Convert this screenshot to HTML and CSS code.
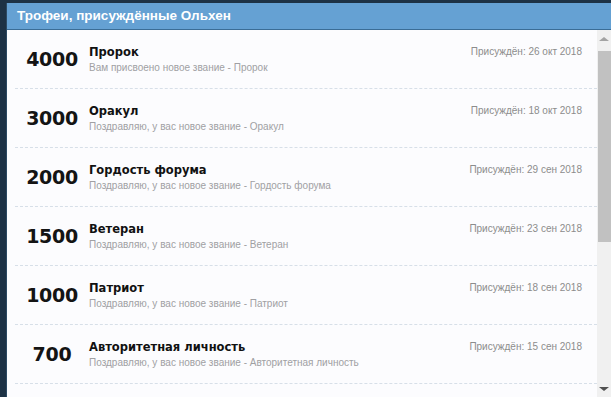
FILE: index.html
```html
<!DOCTYPE html>
<html lang="ru">
<head>
    <meta charset="UTF-8">
    <meta name="viewport" content="width=device-width, initial-scale=1.0">
    <title>Трофеи</title>
    <link rel="stylesheet" href="styles.css">
</head>
<body>
    <div class="overlay">
        <h2 class="overlay-title">Трофеи, присуждённые Ольхен</h2>
        <div class="overlay-body">
            <ol class="trophy-list">
                <li class="trophy">
                    <div class="trophy-points">4000</div>
                    <div class="trophy-info">
                        <div class="trophy-name">Пророк</div>
                        <div class="trophy-desc">Вам присвоено новое звание - Пророк</div>
                    </div>
                    <div class="trophy-date">Присуждён: 26 окт 2018</div>
                </li>
                <li class="trophy">
                    <div class="trophy-points">3000</div>
                    <div class="trophy-info">
                        <div class="trophy-name">Оракул</div>
                        <div class="trophy-desc">Поздравляю, у вас новое звание - Оракул</div>
                    </div>
                    <div class="trophy-date">Присуждён: 18 окт 2018</div>
                </li>
                <li class="trophy">
                    <div class="trophy-points">2000</div>
                    <div class="trophy-info">
                        <div class="trophy-name">Гордость форума</div>
                        <div class="trophy-desc">Поздравляю, у вас новое звание - Гордость форума</div>
                    </div>
                    <div class="trophy-date">Присуждён: 29 сен 2018</div>
                </li>
                <li class="trophy">
                    <div class="trophy-points">1500</div>
                    <div class="trophy-info">
                        <div class="trophy-name">Ветеран</div>
                        <div class="trophy-desc">Поздравляю, у вас новое звание - Ветеран</div>
                    </div>
                    <div class="trophy-date">Присуждён: 23 сен 2018</div>
                </li>
                <li class="trophy">
                    <div class="trophy-points">1000</div>
                    <div class="trophy-info">
                        <div class="trophy-name">Патриот</div>
                        <div class="trophy-desc">Поздравляю, у вас новое звание - Патриот</div>
                    </div>
                    <div class="trophy-date">Присуждён: 18 сен 2018</div>
                </li>
                <li class="trophy">
                    <div class="trophy-points">700</div>
                    <div class="trophy-info">
                        <div class="trophy-name">Авторитетная личность</div>
                        <div class="trophy-desc">Поздравляю, у вас новое звание - Авторитетная личность</div>
                    </div>
                    <div class="trophy-date">Присуждён: 15 сен 2018</div>
                </li>
            </ol>
            <div class="scrollbar">
                <div class="scroll-arrow up"></div>
                <div class="scroll-track">
                    <div class="scroll-thumb"></div>
                </div>
                <div class="scroll-arrow down"></div>
            </div>
        </div>
    </div>
</body>
</html>
```

FILE: styles.css
```css
html, body {
    height: 100%;
}
body {
    margin: 0;
    padding: 3px 0 0 6px;
    box-sizing: border-box;
    background: #1d3245;
    overflow: hidden;
    font-family: "Liberation Sans", Arial, sans-serif;
}
.overlay {
    display: flex;
    flex-direction: column;
    height: 100%;
    border-left: 1px solid #2c4a63;
}
.overlay-title {
    margin: 0;
    height: 26px;
    padding: 0 10px;
    line-height: 26px;
    font-size: 13.5px;
    font-weight: bold;
    color: #fff;
    background: #65a1d3;
    border-bottom: 1px solid #3b6d96;
}
.overlay-body {
    flex: 1;
    display: flex;
    min-height: 0;
    background: #fcfcfe;
}
.trophy-list {
    flex: 1;
    list-style: none;
    margin: 0;
    padding: 0 0 0 8px;
    overflow: hidden;
}
.trophy {
    display: flex;
    align-items: flex-start;
    height: 58px;
    padding: 0 15px 0 0;
    border-bottom: 1px dashed #d7dfe8;
}
.trophy-points {
    width: 74px;
    padding-top: 18px;
    text-align: center;
    font-family: "DejaVu Sans", Verdana, sans-serif;
    font-size: 19px;
    font-weight: bold;
    color: #141414;
    letter-spacing: -0.3px;
}
.trophy-info {
    flex: 1;
    padding-top: 15px;
}
.trophy-name {
    font-family: "DejaVu Sans", Verdana, sans-serif;
    font-size: 11.5px;
    font-weight: bold;
    color: #111;
    line-height: 15px;
}
.trophy-desc {
    font-size: 10px;
    color: #a0a0a3;
    line-height: 13px;
    margin-top: 1px;
}
.trophy-date {
    padding-top: 15px;
    font-size: 10px;
    color: #8c8c8c;
    line-height: 13px;
}
.scrollbar {
    width: 14px;
    display: flex;
    flex-direction: column;
    background: #f0f0f0;
}
.scroll-arrow {
    height: 17px;
    display: flex;
    align-items: center;
    justify-content: center;
}
.scroll-arrow::before {
    content: "";
    border-left: 5px solid transparent;
    border-right: 5px solid transparent;
}
.scroll-arrow.up::before {
    border-bottom: 4px solid #a3a3a3;
}
.scroll-arrow.down::before {
    border-top: 4px solid #505050;
}
.scroll-track {
    flex: 1;
}
.scroll-thumb {
    margin: 4px 0 0 1px;
    height: 191px;
    background: #c1c1c1;
}
```
